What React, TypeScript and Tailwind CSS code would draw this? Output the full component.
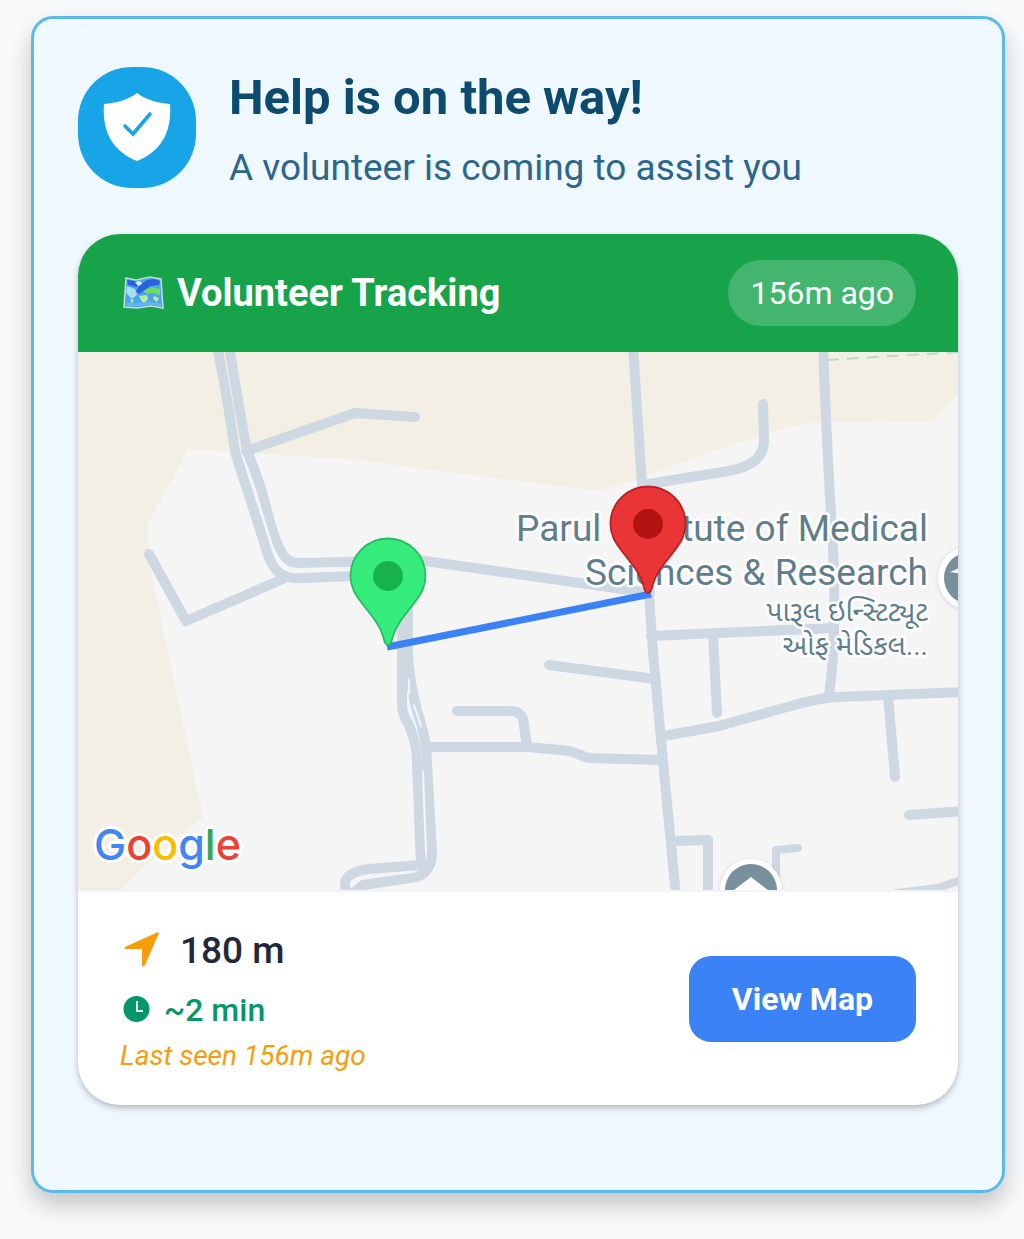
const ROAD = "#cdd8e3";

function ShieldIcon() {
  return (
    <svg viewBox="0 0 68 68" className="w-17 h-17" aria-hidden="true">
      <path d="M34 0 C25 7 13 10 1 11 C-1 38 9 58 34 68 C59 58 69 38 67 11 C55 10 43 7 34 0 Z" fill="#fff" />
      <path d="M22 33 L30 41 L47 21" fill="none" stroke="#17a5e8" strokeWidth="3.6" strokeLinecap="round" strokeLinejoin="miter" />
    </svg>
  );
}

function WorldMapIcon() {
  return (
    <svg viewBox="-3 0 45 34" className="w-[45px] h-[34px]" aria-hidden="true">
      <path d="M3 2 L13 4 L27 1 L38 3 L40 32 L28 30 L14 32 L1 31 Z" fill="#4aa6ea" stroke="#c3d9cf" strokeWidth="1.6" />
      <path d="M4 4 L12 5 L17 7 L14 11 L5 9 Z" fill="#2b5fe0" />
      <path d="M17 9 L24 4 L31 3 L37 5 L36 9 L27 10 L21 15 L16 18 L13 15 Z" fill="#2b62d9" />
      <path d="M4 10 L12 13 L14 19 L9 23 L3 17 Z" fill="#a9dcf4" />
      <path d="M12 6 L17 5 L19 8 L15 10 Z" fill="#d8f0ff" />
      <path d="M20 15 L29 11 L37 13 L37 19 L30 17 L24 18 Z" fill="#6fdc62" />
      <path d="M16 20 L24 19 L25 23 L21 28 L18 24 Z M31 20 L36 22 L34 26 L30 23 Z M7 23 L11 24 L9 28 Z" fill="#bfe9a0" />
      <path d="M3 28 L12 29 L26 27 L38 29" fill="none" stroke="#5db9f0" strokeWidth="3" />
    </svg>
  );
}

function Pin({ x, y, fill, edge, dot }: { x: number; y: number; fill: string; edge: string; dot: string }) {
  return (
    <g transform={`translate(${x} ${y})`}>
      <path
        d="M0 0 C-3 0 -3.500 -4 -5 -9 C-9 -22 -18 -31 -27 -43 C-33 -51 -37.500 -58 -37.500 -69 A37.500 37.500 0 0 1 37.500 -69 C37.500 -58 33 -51 27 -43 C18 -31 9 -22 5 -9 C3.500 -4 3 0 0 0 Z"
        fill={fill}
        stroke={edge}
        strokeWidth="1.800"
      />
      <circle cx="0" cy="-69" r="15" fill={dot} />
    </g>
  );
}

function TrackingMap() {
  return (
    <svg
      viewBox="0 0 880 538"
      preserveAspectRatio="xMidYMid slice"
      className="block w-full bg-[#f5f5f5]"
      role="img"
      aria-label="Map of the volunteer's route"
    >
      <path
        d="M0 0 H880 V42 L855 69 L740 70 L710 75 L640 97 L560 127 L520 139 L450 130 L280 108 L110 97 L70 172 L71 210 L90 300 L125 466 L90 493 L42 538 H0 Z"
        fill="#f4efe4"
      />
      <path d="M749 8 L880 0" stroke="#b5dec5" strokeWidth="2" strokeDasharray="12 8" fill="none" />
      <g fill="none" stroke={ROAD} strokeWidth="10" strokeLinecap="round" strokeLinejoin="round">
        <path d="M139 -6 Q152 60 157 100 L186 190 Q193 218 205 223 Q212 227 225 226 L300 223" />
        <path d="M151 -6 Q161 55 169 99 Q183 132 190 163 Q201 204 212 209 Q218 212 230 211 L300 209 L340 208 L572 241" />
        <path d="M168 99 L277 61 L337 65" />
        <path d="M71 202 L108 269 L205 227" />
        <path d="M324 225 V350 Q324 364 331 373 Q339 392 339 410 L343 513 L290 517 Q270 520 267 530 L268 544" />
        <path d="M330 225 V300 Q331 330 340 362 Q349 388 349 410 L354 500 Q354 520 338 525 L285 533 L272 544" />
        <path d="M555 -6 L564 133 Q570 230 575 300 L586 420 L598 544" />
        <path d="M565 133 L650 119 Q685 113 686 90 L685 52" />
        <path d="M745 -6 Q750 120 755 195 Q759 290 751 343" />
        <path d="M573 284 L755 276" />
        <path d="M635 283 L639 361" />
        <path d="M471 313 L577 327" />
        <path d="M379 359 H432 Q442 359 445 367 L449 394" />
        <path d="M348 395 H450 L492 399 L510 406 L582 408" />
        <path d="M586 384 L641 374 L720 352 Q742 346 760 345 L886 340" />
        <path d="M810 343 L817 425" />
        <path d="M831 463 L886 459" />
        <path d="M594 489 L630 488 V544" />
        <path d="M698 544 V498 L720 496" strokeWidth="8" />
        <path d="M818 541 L860 536 L886 527" strokeWidth="8" />
      </g>
      <g fill="none" stroke="#f3f5f6" strokeWidth="2" strokeLinecap="round">
        <path d="M173 127 L195 196 Q202 215 214 217 L270 216" />
        <path d="M331 328 V342" />
        <path d="M336 353 L343 374" />
        <path d="M345 420 L348 500" />
        <path d="M286 526 L335 520" />
      </g>
      <g fill="#fff" className="drop-shadow-sm">
        <circle cx="673" cy="538" r="31" />
        <circle cx="892" cy="226" r="32" />
      </g>
      <g fill="#78909c">
        <circle cx="673" cy="538" r="26" />
        <circle cx="892" cy="226" r="26" />
      </g>
      <path d="M656 538 L673 525 L690 538 Z M872 220 L886 214 V222 Z" fill="#fff" />
      <g
        textAnchor="end"
        fill="#607d8b"
        stroke="#fff"
        strokeWidth="5"
        strokeLinejoin="round"
        paintOrder="stroke"
        className="font-['Roboto','Noto_Sans_Gujarati',sans-serif]"
      >
        <text x="850" y="189" fontSize="37">Parul Institute of Medical</text>
        <text x="850" y="233" fontSize="37">Sciences &amp; Research</text>
        <text x="850" y="269" fontSize="28">પારૂલ ઇન્સ્ટિટ્યૂટ</text>
        <text x="850" y="303" fontSize="28">ઓફ મેડિકલ...</text>
      </g>
      <path d="M309 295 L573 242" stroke="#3b82f6" strokeWidth="7" />
      <Pin x={310} y={293} fill="#36ec7c" edge="#27bd5f" dot="#17b14d" />
      <Pin x={570} y={241} fill="#e93535" edge="#b92222" dot="#b11313" />
      <g
        fontSize="43"
        fontWeight="500"
        stroke="#fff"
        strokeWidth="6"
        strokeLinejoin="round"
        paintOrder="stroke"
        className="font-['Inter',sans-serif]"
      >
        <text x="16" y="508">
          <tspan fill="#4285f4">G</tspan>
          <tspan fill="#ea4335">o</tspan>
          <tspan fill="#fbbc05">o</tspan>
          <tspan fill="#4285f4">g</tspan>
          <tspan fill="#34a853">l</tspan>
          <tspan fill="#ea4335">e</tspan>
        </text>
      </g>
    </svg>
  );
}

function NavigateIcon() {
  return (
    <svg viewBox="0 0 40 40" className="w-10 h-10" aria-hidden="true">
      <path d="M38 1 L5 16 Q4 18 6 18 H22 V34 Q23 37 25 34 L39 2 Z" fill="#f59e0b" />
    </svg>
  );
}

function ClockIcon() {
  return (
    <svg viewBox="0 0 32 28" className="w-8 h-7" aria-hidden="true">
      <circle cx="16.5" cy="13" r="13" fill="#059669" />
      <path d="M17 5 V15 H23" fill="none" stroke="#e7f6f0" strokeWidth="2" />
    </svg>
  );
}

export default function App() {
  return (
    <main className="min-h-screen bg-[#f9fafb] pt-4 pb-[46px] pl-[31px] pr-[19px] font-['Roboto',sans-serif]">
      <section className="rounded-[22px] border-3 border-[#5bbbe8] bg-[#f0f8ff] px-11 pt-[47px] pb-[85px] shadow-[0_12px_24px_rgba(0,0,0,0.22)]">
        <header className="flex items-center gap-[33px]">
          <div className="flex h-[121px] w-[118px] shrink-0 items-center justify-center rounded-[54px] bg-[#17a5e8]">
            <ShieldIcon />
          </div>
          <div className="pt-0.5">
            <h1 className="text-[49px] leading-[60px] font-bold text-[#0c4a6e]">Help is on the way!</h1>
            <p className="mt-5 text-[37px] leading-10 text-[#2b668c]">A volunteer is coming to assist you</p>
          </div>
        </header>

        <article className="mt-[46px] overflow-hidden rounded-[42px] bg-white shadow-[0_3px_6px_rgba(0,0,0,0.25)]">
          <div className="flex items-center justify-between bg-[#16a34a] px-[42px] py-[26px] text-white">
            <h2 className="flex items-center gap-3 text-[38px] leading-[48px] font-bold">
              <WorldMapIcon />
              Volunteer Tracking
            </h2>
            <span className="rounded-full bg-white/20 px-[22px] py-3 text-[32px] leading-[42px]">156m ago</span>
          </div>
          <TrackingMap />
          <div className="flex items-center justify-between border-t-2 border-gray-100 px-[42px] pt-8 pb-[31px]">
            <div>
              <p className="flex items-center gap-5 text-[37px] leading-[54px] font-medium text-[#1f2937]">
                <NavigateIcon />
                180 m
              </p>
              <p className="mt-1 flex items-center gap-3 text-[32px] leading-[56px] font-medium text-[#059669]">
                <ClockIcon />
                ~2 min
              </p>
              <p className="text-[28px] leading-9 text-[#f59e0b] italic">Last seen 156m ago</p>
            </div>
            <button type="button" className="rounded-[22px] bg-[#3b82f6] px-[43px] py-[22px] text-[32px] leading-[42px] font-bold text-white">
              View Map
            </button>
          </div>
        </article>
      </section>
    </main>
  );
}
